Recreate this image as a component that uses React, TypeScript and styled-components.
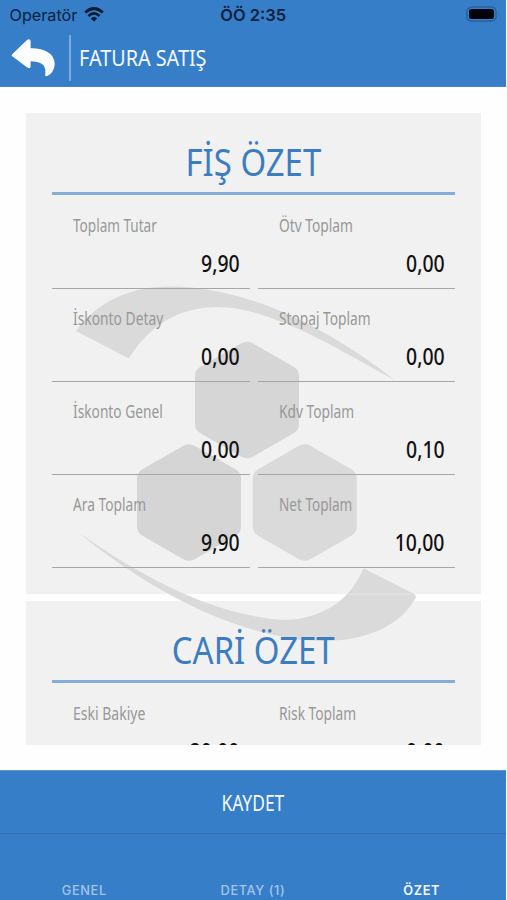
import React from "react";
import styled, { createGlobalStyle } from "styled-components";

const BLUE = "#377ec9";

const GlobalStyle = createGlobalStyle`
  * { box-sizing: border-box; }
  body { margin: 0; background: #fdfefe; font-family: "Noto Sans", sans-serif; }
`;

const Screen = styled.div`
  width: 507px;
  height: 900px;
  padding-right: 1px;
  display: flex;
  flex-direction: column;
  overflow: hidden;
  background: #fefefe;
`;

const Header = styled.header`
  height: 87px;
  flex: none;
  background: ${BLUE};
  border-bottom: 1px solid #4d7fb3;
`;

const StatusBar = styled.div`
  height: 29px;
  padding: 0 6px 0 9.5px;
  display: grid;
  grid-template-columns: 1fr auto 1fr;
  align-items: center;
  font-family: Inter, sans-serif;
  color: #09213d;
`;

const Carrier = styled.div`
  display: flex;
  align-items: center;
  gap: 7px;
  font-size: 16.2px;
  letter-spacing: 0;
`;

const Clock = styled.div`
  font-size: 16.5px;
  font-weight: 600;
  letter-spacing: 0;
  padding-right: 3px;
`;

const Battery = styled.svg`
  justify-self: end;
  margin-top: -1px;
`;

const TitleBar = styled.div`
  height: 57px;
  padding-left: 10px;
  display: flex;
  align-items: center;
`;

const BackButton = styled.button`
  width: 46px;
  height: 42px;
  padding: 0;
  border: 0;
  background: none;
`;

const Separator = styled.div`
  width: 2px;
  height: 46px;
  margin: 0 8px 0 13px;
  background: #79aadd;
`;

const Condensed = styled.span<{ $scale: number; $origin?: string }>`
  display: block;
  white-space: nowrap;
  transform: scaleX(${(p) => p.$scale});
  transform-origin: ${(p) => p.$origin ?? "left"} center;
`;

const PageTitle = styled.h1`
  margin: 0;
  font-size: 22.5px;
  line-height: 30px;
  font-weight: 400;
  color: #f3f9ff;
`;

const Scroller = styled.main`
  position: relative;
  height: 658px;
  flex: none;
  padding: 26px 25px 0 26px;
  overflow: hidden;
  display: flex;
  flex-direction: column;
  gap: 7px;
`;

const Watermark = styled.svg`
  position: absolute;
  left: 0;
  top: 0;
`;

const Card = styled.section`
  height: 481px;
  flex: none;
  padding: 24px 26px 0;
  background: #f1f1f1;
`;

const CardBody = styled.div`
  position: relative;
  z-index: 1;
`;

const CardTitle = styled.h2`
  height: 58px;
  margin: 0;
  display: flex;
  justify-content: center;
  border-bottom: 3px solid #86add9;
  color: #3c7dc0;
  font-size: 38.5px;
  line-height: 49px;
  font-weight: 400;
`;

const Fields = styled.div`
  display: grid;
  grid-template-columns: 198px 197px;
  column-gap: 8px;
`;

const Field = styled.div`
  height: 93px;
  padding: 16px 10.5px 0 21px;
  border-bottom: 1.5px solid #a6a6a6;
  &:nth-child(-n + 2) {
    height: 94px;
    padding-top: 17px;
  }
`;

const FieldLabel = styled.div`
  font-size: 17.5px;
  line-height: 26px;
  color: #989898;
`;

const FieldValue = styled.div`
  display: flex;
  justify-content: flex-end;
  margin-top: 9px;
  font-size: 24px;
  line-height: 32px;
  font-weight: 500;
  color: #111;
`;

const Footer = styled.footer`
  margin-top: 25px;
  flex: 1;
  display: flex;
  flex-direction: column;
  background: ${BLUE};
  border-top: 1px solid #5d97d2;
`;

const SaveButton = styled.button`
  height: 63px;
  padding: 2px 1px 0 0;
  display: flex;
  justify-content: center;
  align-items: center;
  border: 0;
  border-bottom: 1px solid #2e6eb3;
  background: none;
  color: #f3f9ff;
  font: 400 21px "Noto Sans", sans-serif;
`;

const Tabs = styled.nav`
  display: grid;
  grid-template-columns: repeat(3, 1fr);
  padding-top: 48px;
`;

const Tab = styled.div<{ $active?: boolean }>`
  text-align: center;
  font-family: Inter, sans-serif;
  font-size: 12.8px;
  line-height: 18px;
  letter-spacing: 0.6px;
  font-weight: ${(p) => (p.$active ? 600 : 500)};
  color: ${(p) => (p.$active ? "#f2f8ff" : "#a3c5ea")};
`;

type Entry = { label: string; value: string; scale: number };

const receipt: Entry[] = [
  { label: "Toplam Tutar", value: "9,90", scale: 0.775 },
  { label: "Ötv Toplam", value: "0,00", scale: 0.785 },
  { label: "İskonto Detay", value: "0,00", scale: 0.79 },
  { label: "Stopaj Toplam", value: "0,00", scale: 0.785 },
  { label: "İskonto Genel", value: "0,00", scale: 0.785 },
  { label: "Kdv Toplam", value: "0,10", scale: 0.785 },
  { label: "Ara Toplam", value: "9,90", scale: 0.785 },
  { label: "Net Toplam", value: "10,00", scale: 0.775 },
];

const account: Entry[] = [
  { label: "Eski Bakiye", value: "20,00", scale: 0.8 },
  { label: "Risk Toplam", value: "0,00", scale: 0.785 },
];

function SummaryCard({ title, entries }: { title: string; entries: Entry[] }) {
  return (
    <Card>
      <CardBody>
        <CardTitle>
          <Condensed $scale={0.855} $origin="center">{title}</Condensed>
        </CardTitle>
        <Fields>
          {entries.map((e) => (
            <Field key={e.label}>
              <FieldLabel>
                <Condensed $scale={e.scale}>{e.label}</Condensed>
              </FieldLabel>
              <FieldValue>
                <Condensed $scale={0.81} $origin="right">{e.value}</Condensed>
              </FieldValue>
            </Field>
          ))}
        </Fields>
      </CardBody>
    </Card>
  );
}

const HEX =
  "M-7 -56 Q0 -60.500 7 -56 L47 -33 Q52 -30 52 -24 L52 24 Q52 30 47 33 L7 56 Q0 60.500 -7 56 L-47 33 Q-52 30 -52 24 L-52 -24 Q-52 -30 -47 -33 Z";

export default function App() {
  return (
    <Screen>
      <GlobalStyle />
      <Header>
        <StatusBar>
          <Carrier>
            Operatör
            <svg width="20" height="15" viewBox="0 0 20 15" fill="none" stroke="#061a33" strokeWidth="2.7">
              <path d="M1.200 5.400 Q10 -2.400 18.800 5.400" />
              <path d="M4.500 8.900 Q10 3.900 15.500 8.900" />
              <path d="M6.800 11.400 Q10 8.600 13.200 11.400 L10 14.600 Z" fill="#061a33" stroke="none" />
            </svg>
          </Carrier>
          <Clock>ÖÖ 2:35</Clock>
          <Battery width="34" height="16" viewBox="0 0 34 16">
            <rect x="1" y="1" width="29" height="14" rx="4.500" fill="none" stroke="#28629e" strokeWidth="1.500" />
            <rect x="3" y="3" width="25" height="10" rx="2.500" fill="#000409" />
            <path d="M32 6 Q33.500 8 32 10 Z" fill="#28629e" />
          </Battery>
        </StatusBar>
        <TitleBar>
          <BackButton aria-label="Geri">
            <svg width="46" height="42" viewBox="0 0 46 42" fill="#fff">
              <path d="M2.200 17.300 L17.300 2.800 Q20 1.200 20.600 4 L20.600 11.300 C34 11 44.500 16.500 44.700 26.500 C44.700 33 41 38 36.600 39.200 Q34.600 39.200 35.300 37 C36.500 27 30 24.500 20.600 24.300 L20.600 29.500 Q20 32.500 17.300 30.600 L2.200 19.300 Q1 18.300 2.200 17.300 Z" />
            </svg>
          </BackButton>
          <Separator />
          <PageTitle>
            <Condensed $scale={0.88}>FATURA SATIŞ</Condensed>
          </PageTitle>
        </TitleBar>
      </Header>
      <Scroller>
        <SummaryCard title="FİŞ ÖZET" entries={receipt} />
        <SummaryCard title="CARİ ÖZET" entries={account} />
        <Watermark width="506" height="658" viewBox="0 87 506 658">
          <g fill="#dadada">
            <path d="M76 331 C100 298 135 286.500 170 286.500 C240 287 315 318 396 381 C340 350 270 307 218 307 C175 307 147 329 129 358.500 Z" />
            <path d="M78 532 C125 565 205 616 285 620 C325 619 352 597 363 569 Q365 568 367 570 L414 594 Q418 597 414 600 C400 627 362 641 325 641 C245 641 150 592 78 532 Z" />
          </g>
          <path d={HEX} transform="translate(247 400)" fill="#d6d6d6" />
          <path d={HEX} transform="translate(189 502.500)" fill="#d5d5d5" />
          <path d={HEX} transform="translate(304.700 502.500)" fill="#dadada" />
          <path d="M348 594 H411" stroke="#e6e6e6" />
        </Watermark>
      </Scroller>
      <Footer>
        <SaveButton>
          <Condensed $scale={0.83} $origin="center">KAYDET</Condensed>
        </SaveButton>
        <Tabs>
          <Tab>GENEL</Tab>
          <Tab>DETAY (1)</Tab>
          <Tab $active>ÖZET</Tab>
        </Tabs>
      </Footer>
    </Screen>
  );
}
